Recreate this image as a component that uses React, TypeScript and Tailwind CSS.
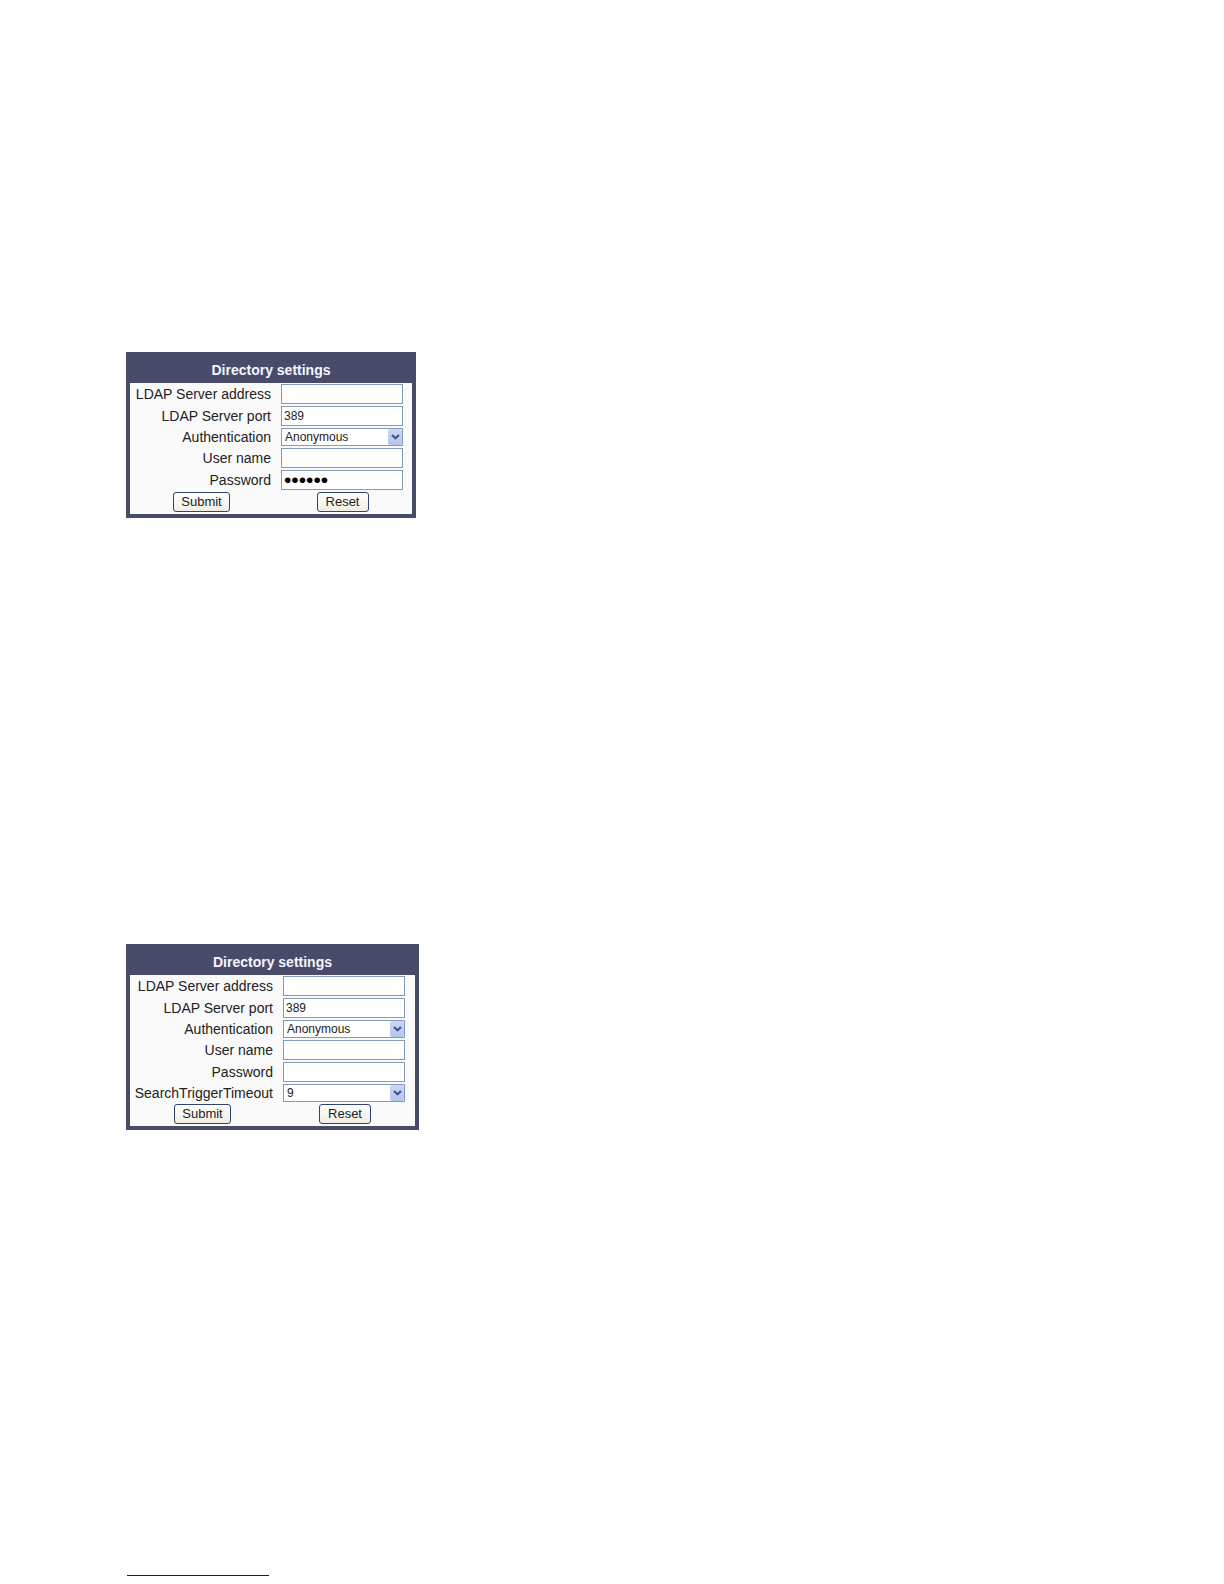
import { useId } from "react";
import clsx from "clsx";

type Field = {
  label: string;
  kind: "text" | "password" | "select";
  value: string;
};

const fieldBox =
  "w-[122px] rounded-none border border-[#7f9db9] bg-white outline-none";

function Chevron() {
  return (
    <span className="pointer-events-none absolute top-px right-px flex h-4 w-[14px] items-center justify-center rounded-xs bg-linear-to-b from-[#cbd7fb] to-[#b4c4f0]">
      <svg width="9" height="6" viewBox="0 0 9 6" fill="none" aria-hidden="true">
        <path d="M1 1 L4.5 4.3 L8 1" stroke="#45547c" strokeWidth="2.2" />
      </svg>
    </span>
  );
}

function Row({ field }: { field: Field }) {
  const id = useId();
  return (
    <>
      <label
        htmlFor={id}
        className="flex items-center justify-end pr-0.5 text-[14px] leading-[18px] whitespace-nowrap"
      >
        {field.label}
      </label>
      <div className="pl-2">
        {field.kind === "select" ? (
          <div className="relative w-[122px]">
            <select
              id={id}
              defaultValue={field.value}
              className={clsx(fieldBox, "block h-[18px] appearance-none pr-4 pl-[3px] text-[12px] leading-4")}
            >
              <option>{field.value}</option>
            </select>
            <Chevron />
          </div>
        ) : (
          <input
            id={id}
            type={field.kind}
            defaultValue={field.value}
            className={clsx(
              fieldBox,
              "block h-5 px-0.5 leading-4",
              field.kind === "password" ? "text-[21px] text-black" : "text-[12px]",
            )}
          />
        )}
      </div>
    </>
  );
}

const button =
  "h-5 rounded-[3px] border border-[#2f4474] bg-linear-to-b from-white to-[#efede4] text-[13px] leading-4";

function Panel({ fields, columns }: { fields: Field[]; columns: string }) {
  return (
    <form
      className="w-fit border-4 border-t-0 border-[#494b6b] bg-[#fafafa]"
      onSubmit={(e) => e.preventDefault()}
    >
      <h2 className="bg-[#494b6b] pt-[9px] pb-1 text-center text-[14px] leading-[18px] font-bold text-[#f4f6ff]">
        Directory settings
      </h2>
      <div className={clsx("grid gap-y-0.5 pt-px pb-0.5", columns)}>
        {fields.map((f) => (
          <Row key={f.label} field={f} />
        ))}
        <div className="flex justify-center">
          <button type="submit" className={clsx(button, "w-[57px]")}>
            Submit
          </button>
        </div>
        <div className="flex justify-center">
          <button type="reset" className={clsx(button, "w-[52px]")}>
            Reset
          </button>
        </div>
      </div>
    </form>
  );
}

const common: Field[] = [
  { label: "LDAP Server address", kind: "text", value: "" },
  { label: "LDAP Server port", kind: "text", value: "389" },
  { label: "Authentication", kind: "select", value: "Anonymous" },
  { label: "User name", kind: "text", value: "" },
];

export default function App() {
  return (
    <main className="flex min-h-screen flex-col items-start bg-white pt-[352px] pb-2 pl-[126px] font-['Liberation_Sans',Arial,sans-serif] text-[#222222]">
      <Panel
        columns="grid-cols-[143px_139px]"
        fields={[...common, { label: "Password", kind: "password", value: "123456" }]}
      />
      <div className="mt-[426px]">
        <Panel
          columns="grid-cols-[145px_140px]"
          fields={[
            ...common,
            { label: "Password", kind: "password", value: "" },
            { label: "SearchTriggerTimeout", kind: "select", value: "9" },
          ]}
        />
      </div>
      <hr className="mt-[445px] ml-px h-px w-[142px] border-0 bg-[#10108a]" />
    </main>
  );
}
